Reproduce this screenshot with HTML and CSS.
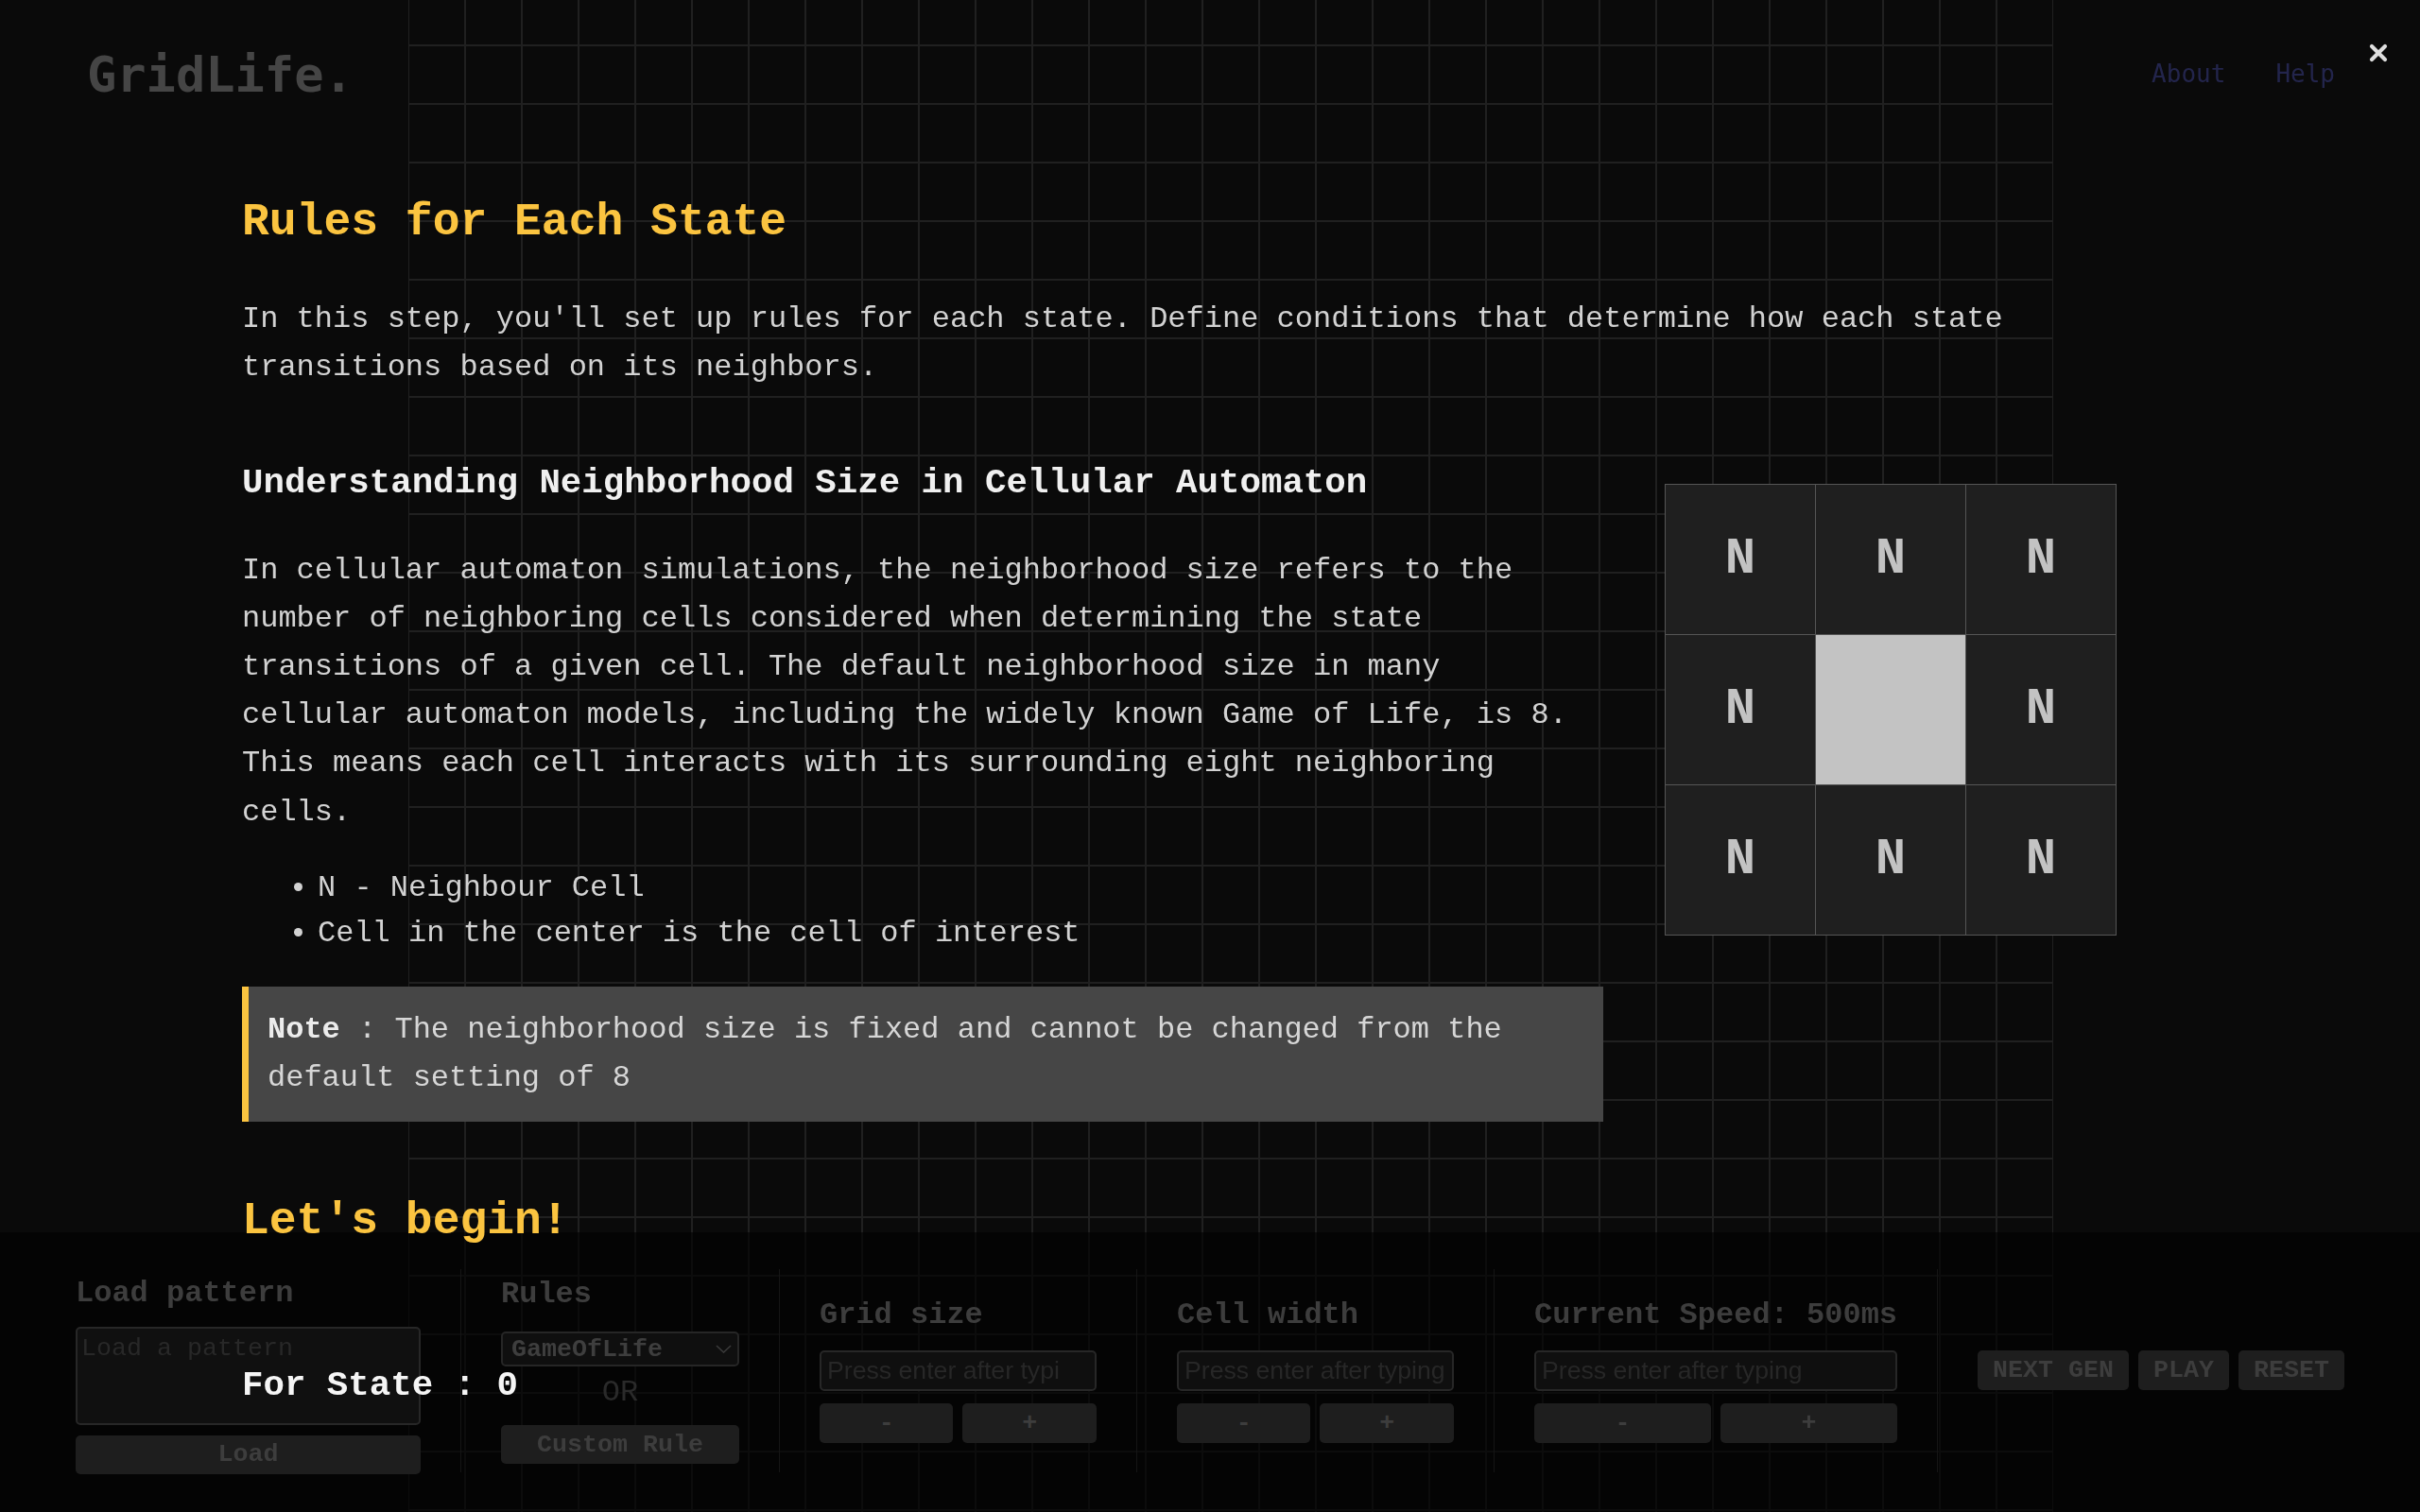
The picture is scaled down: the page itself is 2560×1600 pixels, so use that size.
FILE: index.html
```html
<!DOCTYPE html>
<html lang="en">
<head>
<meta charset="utf-8">
<title>GridLife.</title>
<link rel="stylesheet" href="styles.css">
</head>
<body>
  <div class="app">
    <div class="board"></div>
  </div>

  <header class="topbar">
    <div class="logo">GridLife.</div>
    <nav class="nav">
      <a href="#">About</a>
      <a href="#">Help</a>
    </nav>
  </header>

  <footer class="panel">
    <div class="col col-load">
      <div class="label">Load pattern</div>
      <textarea class="pattern" placeholder="Load a pattern"></textarea>
      <button class="btn">Load</button>
    </div>
    <div class="sep"></div>
    <div class="col col-rules">
      <div class="label">Rules</div>
      <div class="select-wrap">
        <select class="rules"><option>GameOfLife</option></select>
        <svg class="chev" viewBox="0 0 17 9" width="17" height="9"><path d="M1 1 L8.5 8 L16 1" fill="none" stroke="#3a3a3a" stroke-width="1.6"/></svg>
      </div>
      <div class="or">OR</div>
      <button class="btn">Custom Rule</button>
    </div>
    <div class="sep"></div>
    <div class="col col-num">
      <div class="label">Grid size</div>
      <input class="field clip" type="text" placeholder="Press enter after typing">
      <div class="pm"><button class="btn">-</button><button class="btn">+</button></div>
    </div>
    <div class="sep"></div>
    <div class="col col-num">
      <div class="label">Cell width</div>
      <input class="field" type="text" placeholder="Press enter after typing">
      <div class="pm"><button class="btn">-</button><button class="btn">+</button></div>
    </div>
    <div class="sep"></div>
    <div class="col col-speed">
      <div class="label">Current Speed: 500ms</div>
      <input class="field" type="text" placeholder="Press enter after typing">
      <div class="pm"><button class="btn">-</button><button class="btn">+</button></div>
    </div>
    <div class="sep"></div>
    <div class="actions">
      <button class="btn">NEXT GEN</button>
      <button class="btn">PLAY</button>
      <button class="btn">RESET</button>
    </div>
  </footer>

  <div class="modal">
    <button class="close" aria-label="Close">
      <svg viewBox="0 0 20 20" width="20" height="20"><path d="M3 3 L17 17 M17 3 L3 17" stroke="#dedede" stroke-width="4.2" stroke-linecap="round"/></svg>
    </button>
    <div class="modal-body">
      <h2 class="title">Rules for Each State</h2>
      <p class="intro">In this step, you'll set up rules for each state. Define conditions that determine how each state transitions based on its neighbors.</p>

      <div class="row">
        <div class="explain">
          <h3>Understanding Neighborhood Size in Cellular Automaton</h3>
          <p>In cellular automaton simulations, the neighborhood size refers to the number of neighboring cells considered when determining the state transitions of a given cell. The default neighborhood size in many cellular automaton models, including the widely known Game of Life, is 8. This means each cell interacts with its surrounding eight neighboring cells.</p>
          <ul>
            <li>N - Neighbour Cell</li>
            <li>Cell in the center is the cell of interest</li>
          </ul>
        </div>
        <div class="nbr-wrap">
          <div class="nbr">
            <div class="cell">N</div>
            <div class="cell">N</div>
            <div class="cell">N</div>
            <div class="cell">N</div>
            <div class="cell center"></div>
            <div class="cell">N</div>
            <div class="cell">N</div>
            <div class="cell">N</div>
            <div class="cell">N</div>
          </div>
        </div>
      </div>

      <p class="note"><b class="note-key">Note</b> : The neighborhood size is fixed and cannot be changed from the default setting of 8</p>

      <h2 class="title begin">Let's begin!</h2>
      <h3 class="state">For State : 0</h3>
    </div>
  </div>
</body>
</html>
```

FILE: styles.css
```css
* { box-sizing: border-box; }

html, body {
  margin: 0;
  padding: 0;
  height: 100%;
}

body {
  background: #0a0a0a;
  overflow: hidden;
  font-family: "Courier New", "Nimbus Mono PS", "Nimbus Mono L", "FreeMono", "Liberation Mono", monospace;
}

/* ---------- background page (dimmed under modal) ---------- */
.app {
  display: flex;
  height: 1600px;
}

.board {
  margin-left: 432px;
  width: 1740px;
  height: 1600px;
  background-image:
    linear-gradient(to right, #202020 0 1px, transparent 1px 59px, #202020 59px 60px),
    linear-gradient(to bottom, #202020 0 2px, transparent 2px 62px);
  background-size: 60px 100%, 100% 62px;
  background-position: 0 0, 0 47px;
}

.topbar {
  position: fixed;
  top: 0;
  left: 0;
  right: 0;
  display: flex;
  justify-content: space-between;
  align-items: flex-start;
  padding: 53px 90px 0 92px;
}

.logo {
  font-family: "DejaVu Sans Mono", monospace;
  font-weight: bold;
  font-size: 52px;
  line-height: 1;
  color: #454545;
}

.nav {
  display: flex;
  gap: 53px;
  margin-top: 12px;
}

.nav a {
  font-family: "DejaVu Sans Mono", monospace;
  font-size: 26px;
  line-height: 1;
  color: #23254c;
  text-decoration: none;
}

/* ---------- bottom control panel ---------- */
.panel {
  position: fixed;
  left: 0;
  right: 0;
  bottom: 0;
  height: 296px;
  padding-bottom: 4px;
  background: rgba(0, 0, 0, 0.6);
  display: flex;
  justify-content: center;
  align-items: center;
  gap: 42px;
}

.sep {
  width: 1px;
  height: 215px;
  background: #151515;
}

.label {
  font-weight: bold;
  font-size: 32px;
  line-height: 38.4px;
  color: #3d3d3d;
  white-space: nowrap;
}

.btn {
  display: block;
  font-family: inherit;
  font-weight: bold;
  font-size: 26.67px;
  color: #3d3d3d;
  background: #1e1e1e;
  border: none;
  border-radius: 5px;
  height: 42px;
  padding: 0 16px;
  white-space: nowrap;
}

.col-load {
  width: 365px;
  margin-top: 10px;
}

.pattern {
  display: block;
  width: 365px;
  height: 104px;
  margin-top: 15px;
  background: #101010;
  border: 2px solid #272727;
  border-radius: 5px;
  padding: 6px 4px;
  font-family: inherit;
  font-size: 26.67px;
  resize: none;
}

.pattern::placeholder { color: #282828; }

.col-load .btn {
  width: 100%;
  height: 41px;
  margin-top: 11px;
}

.col-rules { width: 252px; }

.select-wrap {
  position: relative;
  margin-top: 20px;
  height: 37px;
}

.rules {
  appearance: none;
  -webkit-appearance: none;
  display: block;
  width: 252px;
  height: 37px;
  background: #0f0f0f;
  border: 2px solid #262626;
  border-radius: 5px;
  padding: 0 9px;
  font-family: inherit;
  font-weight: bold;
  font-size: 26.67px;
  color: #3e3e3e;
}

.chev {
  position: absolute;
  right: 8px;
  top: 14px;
}

.or {
  text-align: center;
  font-size: 32px;
  line-height: 38.4px;
  color: #2a2a2a;
  margin-top: 9px;
}

.col-rules .btn {
  width: 100%;
  height: 41px;
  margin-top: 15px;
}

.col-num { width: 293px; }

.field {
  display: block;
  width: 100%;
  height: 43px;
  margin-top: 18px;
  background: #0f0f0f;
  border: 2px solid #272727;
  border-radius: 5px;
  padding: 0 6px;
  font-family: "Liberation Sans", Arial, sans-serif;
  font-size: 26.67px;
}

.field.clip { padding-right: 36px; }

.field::placeholder { color: #272727; }

.pm {
  display: flex;
  gap: 10px;
  margin-top: 13px;
}

.pm .btn { flex: 1; }

.actions {
  display: flex;
  gap: 10px;
}

/* ---------- modal ---------- */
.modal {
  position: fixed;
  inset: 0;
  z-index: 10;
  overflow: hidden;
}

.close {
  position: absolute;
  top: 46px;
  right: 34px;
  width: 20px;
  height: 20px;
  padding: 0;
  border: none;
  background: none;
}

.close svg { display: block; }

.modal-body {
  padding: 207px 256px 0;
  color: #d2d2d2;
  font-size: 32px;
}

.title {
  margin: 0;
  font-size: 48px;
  line-height: 57.6px;
  font-weight: bold;
  color: #fbc440;
}

.intro {
  margin: 47px 0 0;
  line-height: 51.2px;
}

.row {
  display: flex;
  align-items: center;
  margin-top: 74.5px;
}

.explain { flex: 0 0 1440px; }

.explain h3 {
  margin: 0 0 44px;
  font-size: 37.44px;
  line-height: 45px;
  color: #f0f0f0;
}

.explain p {
  margin: 0 20px 0 0;
  line-height: 51.2px;
}

.explain ul {
  margin: 31px 0 0;
  padding-left: 80px;
}

.explain li { line-height: 48.5px; }

.nbr-wrap {
  flex: 1;
  display: flex;
  justify-content: center;
}

.nbr {
  display: grid;
  grid-template-columns: repeat(3, 158px);
  grid-auto-rows: 158px;
  gap: 1px;
  padding: 1px;
  background: #555555;
}

.cell {
  background: #1f1f1f;
  display: flex;
  align-items: center;
  justify-content: center;
  font-weight: bold;
  font-size: 54px;
  color: #c3c3c3;
}

.cell.center { background: #c3c3c3; }

.note {
  width: 1440px;
  margin: 31.5px 0 0;
  background: #464646;
  border-left: 7px solid #fbc440;
  padding: 20px;
  line-height: 51.2px;
  color: #d6d6d6;
}

.note-key { color: #ececec; }

.begin { margin-top: 77px; }

.state {
  margin: 122.5px 0 0;
  font-size: 37.44px;
  line-height: 45px;
  color: #f5f5f5;
}
```
